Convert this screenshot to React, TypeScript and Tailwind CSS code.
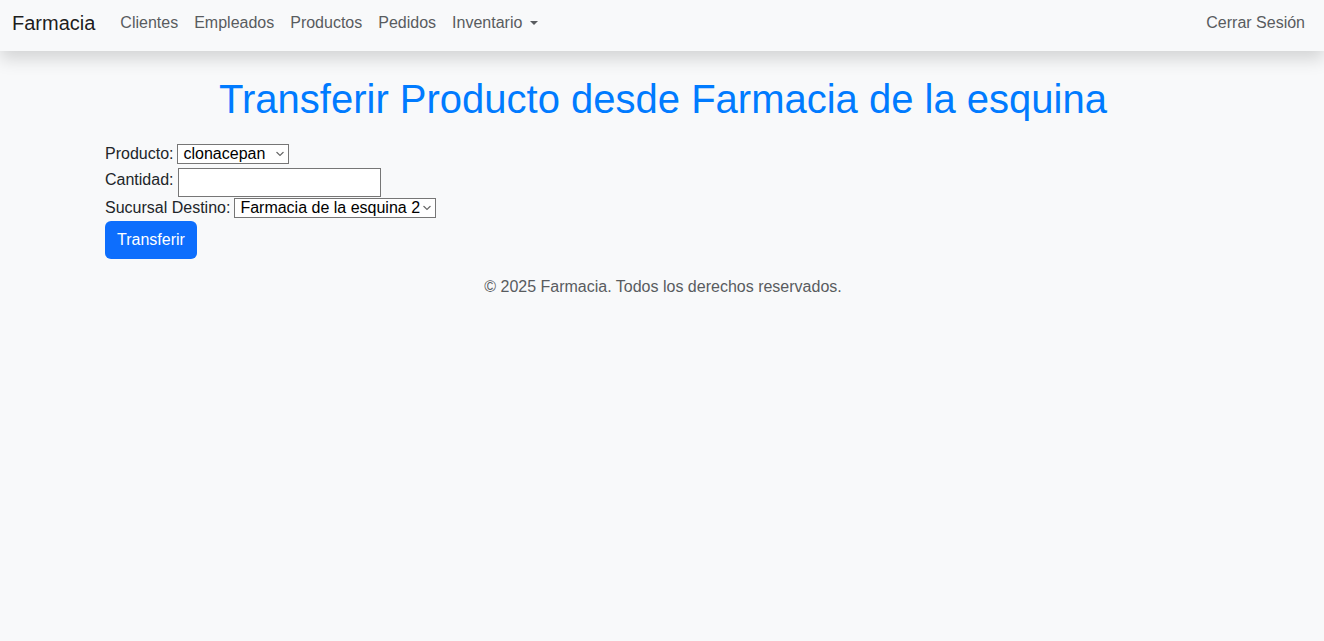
import React from "react";

function Chevron() {
  return (
    <svg className="absolute right-[5px] top-1/2 -translate-y-1/2 pointer-events-none" width="8" height="5" viewBox="0 0 8 5" fill="none">
      <path d="M0.5 0.5 L4 4 L7.5 0.5" stroke="#666" strokeWidth="1.1" />
    </svg>
  );
}

export default function App() {
  return (
    <div className="min-h-[641px] bg-[#f8f9fa] text-[#212529] text-[16px] leading-[24px] font-['Liberation_Sans',Arial,sans-serif]">
      <nav className="h-[51px] bg-[#f8f9fa] shadow-[0_8px_16px_rgba(0,0,0,0.15)] relative z-10">
        <div className="h-[45px] flex items-center pl-[12px] pr-[11px]">
          <span className="text-[20px] leading-[30px] text-[rgba(0,0,0,0.9)] mr-[17px]">Farmacia</span>
          <div className="flex items-center text-[#595c5f]">
            <span className="px-[8px]">Clientes</span>
            <span className="px-[8px]">Empleados</span>
            <span className="px-[8px]">Productos</span>
            <span className="px-[8px]">Pedidos</span>
            <span className="px-[8px] flex items-center">
              Inventario
              <span className="ml-[8px] w-0 h-0 border-l-[4px] border-r-[4px] border-t-[4.5px] border-l-transparent border-r-transparent border-t-[#595c5f]" />
            </span>
          </div>
          <div className="ml-auto text-[#595c5f] px-[8px]">Cerrar Sesión</div>
        </div>
      </nav>
      <div className="w-[1140px] mx-auto pl-[13px] pr-[11px]">
        <h1 className="mt-[24px] text-center text-[40px] leading-[48px] text-[#007bff]">
          Transferir Producto desde Farmacia de la esquina
        </h1>
        <form className="mt-[19px]" onSubmit={(e) => e.preventDefault()}>
          <div className="h-[24px] flex items-center">
            <label className="mr-[4px]">Producto:</label>
            <div className="relative">
              <select className="appearance-none block w-[112px] h-[20px] leading-[18px] border border-[#767676] bg-white text-black pl-[5px]" defaultValue="clonacepan">
                <option value="clonacepan">clonacepan</option>
              </select>
              <Chevron />
            </div>
          </div>
          <div className="flex items-start pt-[2px]">
            <label className="mr-[4px]">Cantidad:</label>
            <input type="text" className="w-[203px] h-[29px] border border-[#767676] bg-white px-[2px]" />
          </div>
          <div className="h-[21px] flex items-center">
            <label className="mr-[4px]">Sucursal Destino:</label>
            <div className="relative">
              <select className="appearance-none block w-[202px] h-[20px] leading-[18px] border border-[#767676] bg-white text-black pl-[5px]" defaultValue="2">
                <option value="2">Farmacia de la esquina 2</option>
              </select>
              <Chevron />
            </div>
          </div>
          <button type="submit" className="mt-[3px] h-[38px] px-[12px] rounded-[6px] bg-[#0d6efd] text-white">
            Transferir
          </button>
        </form>
        <footer className="mt-[16px] text-center text-[#595c5f]">© 2025 Farmacia. Todos los derechos reservados.</footer>
      </div>
    </div>
  );
}
